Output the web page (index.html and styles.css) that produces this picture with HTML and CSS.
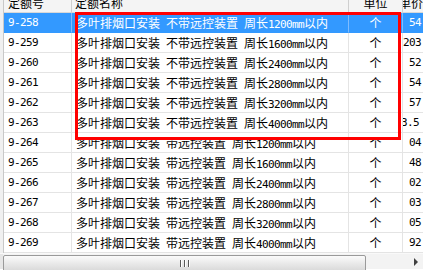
FILE: index.html
```html
<!DOCTYPE html>
<html>
<head>
<meta charset="utf-8">
<link rel="stylesheet" href="styles.css">
</head>
<body>
<div class="table">
  <div class="row head">
    <div class="gut"></div>
    <div class="c c1"><span class="ht">定额号</span></div>
    <div class="c c2"><span class="ht">定额名称</span></div>
    <div class="c c3"><span class="ht">单位</span></div>
    <div class="c c4"><span class="ht hp">单价</span></div>
  </div>
  <div class="row sel">
    <div class="gut"></div>
    <div class="c c1 n">9-258</div>
    <div class="c c2">多叶排烟口安装<span class="n"> </span>不带远控装置<span class="n"> </span>周长<span class="n">1200mm</span>以内</div>
    <div class="c c3">个</div>
    <div class="c c4 n">54</div>
  </div>
  <div class="row">
    <div class="gut"></div>
    <div class="c c1 n">9-259</div>
    <div class="c c2">多叶排烟口安装<span class="n"> </span>不带远控装置<span class="n"> </span>周长<span class="n">1600mm</span>以内</div>
    <div class="c c3">个</div>
    <div class="c c4 n w">203</div>
  </div>
  <div class="row">
    <div class="gut"></div>
    <div class="c c1 n">9-260</div>
    <div class="c c2">多叶排烟口安装<span class="n"> </span>不带远控装置<span class="n"> </span>周长<span class="n">2400mm</span>以内</div>
    <div class="c c3">个</div>
    <div class="c c4 n">52</div>
  </div>
  <div class="row">
    <div class="gut"></div>
    <div class="c c1 n">9-261</div>
    <div class="c c2">多叶排烟口安装<span class="n"> </span>不带远控装置<span class="n"> </span>周长<span class="n">2800mm</span>以内</div>
    <div class="c c3">个</div>
    <div class="c c4 n">54</div>
  </div>
  <div class="row">
    <div class="gut"></div>
    <div class="c c1 n">9-262</div>
    <div class="c c2">多叶排烟口安装<span class="n"> </span>不带远控装置<span class="n"> </span>周长<span class="n">3200mm</span>以内</div>
    <div class="c c3">个</div>
    <div class="c c4 n">57</div>
  </div>
  <div class="row">
    <div class="gut"></div>
    <div class="c c1 n">9-263</div>
    <div class="c c2">多叶排烟口安装<span class="n"> </span>不带远控装置<span class="n"> </span>周长<span class="n">4000mm</span>以内</div>
    <div class="c c3">个</div>
    <div class="c c4 n w cut">3.5</div>
  </div>
  <div class="row">
    <div class="gut"></div>
    <div class="c c1 n">9-264</div>
    <div class="c c2">多叶排烟口安装<span class="n"> </span>带远控装置<span class="n"> </span>周长<span class="n">1200mm</span>以内</div>
    <div class="c c3">个</div>
    <div class="c c4 n">04</div>
  </div>
  <div class="row">
    <div class="gut"></div>
    <div class="c c1 n">9-265</div>
    <div class="c c2">多叶排烟口安装<span class="n"> </span>带远控装置<span class="n"> </span>周长<span class="n">1600mm</span>以内</div>
    <div class="c c3">个</div>
    <div class="c c4 n">48</div>
  </div>
  <div class="row">
    <div class="gut"></div>
    <div class="c c1 n">9-266</div>
    <div class="c c2">多叶排烟口安装<span class="n"> </span>带远控装置<span class="n"> </span>周长<span class="n">2400mm</span>以内</div>
    <div class="c c3">个</div>
    <div class="c c4 n">02</div>
  </div>
  <div class="row">
    <div class="gut"></div>
    <div class="c c1 n">9-267</div>
    <div class="c c2">多叶排烟口安装<span class="n"> </span>带远控装置<span class="n"> </span>周长<span class="n">2800mm</span>以内</div>
    <div class="c c3">个</div>
    <div class="c c4 n">03</div>
  </div>
  <div class="row">
    <div class="gut"></div>
    <div class="c c1 n">9-268</div>
    <div class="c c2">多叶排烟口安装<span class="n"> </span>带远控装置<span class="n"> </span>周长<span class="n">3200mm</span>以内</div>
    <div class="c c3">个</div>
    <div class="c c4 n">05</div>
  </div>
  <div class="row">
    <div class="gut"></div>
    <div class="c c1 n">9-269</div>
    <div class="c c2">多叶排烟口安装<span class="n"> </span>带远控装置<span class="n"> </span>周长<span class="n">4000mm</span>以内</div>
    <div class="c c3">个</div>
    <div class="c c4 n">92</div>
  </div>
  <div class="hscroll">
    <div class="sgut"></div>
    <div class="thumb"><span class="grip"></span><span class="grip"></span><span class="grip"></span></div>
    <div class="track"></div>
    <div class="arrow"></div>
  </div>
  <div class="mark"></div>
</div>
</body>
</html>
```

FILE: styles.css
```css
html, body {
  margin: 0;
  padding: 0;
  background: #ffffff;
  overflow: hidden;
}
.table {
  position: relative;
  width: 423px;
  height: 270px;
  overflow: hidden;
  font-family: "Noto Sans CJK SC", "DejaVu Sans", sans-serif;
  font-size: 12px;
  color: #000;
}
.row {
  display: grid;
  grid-template-columns: 4px 68px 277px 54px 60px;
  height: 20px;
}
.gut {
  background: #f0f0f0;
  border-right: 1px solid #c8c8c8;
  box-sizing: border-box;
}
.c {
  box-sizing: border-box;
  border-right: 1px solid #e4e4e4;
  border-bottom: 1px solid #e4e4e4;
  overflow: hidden;
  white-space: nowrap;
  line-height: 19px;
  height: 20px;
}
.c1 { padding-left: 4px; }
.c2 { padding-left: 4px; }
.c3 { text-align: center; }
.c4 { padding-left: 6px; border-right: none; }
.c4.w { padding-left: 0; }
.c4.cut { text-indent: -2px; }
.n {
  font-family: "DejaVu Sans Mono", monospace;
  font-size: 11px;
  letter-spacing: -0.62px;
}
.head {
  height: 13px;
  background: #f4f4f4;
}
.head .c {
  height: 13px;
  line-height: 12px;
  background: #f4f4f4;
  border-right: 1px solid #cfcfcf;
  border-bottom: 1px solid #d8d8d8;
}
.ht {
  display: block;
  margin-top: -3px;
}
.head .c1 { padding-left: 4px; }
.head .c2 { padding-left: 3px; }
.hp { margin-left: -10px; }
.sel .c {
  background: #3399ff;
  color: #ffffff;
  border-right-color: #7fbcff;
  border-bottom-color: #3399ff;
}
.hscroll {
  display: flex;
  height: 16px;
  background: #f3f3f3;
  border-top: 1px solid #f9f9f9;
  box-sizing: border-box;
}
.sgut {
  width: 3px;
  background: #e6e6e6;
}
.thumb {
  width: 363px;
  margin-top: 1px;
  height: 18px;
  box-sizing: border-box;
  border: 1px solid #9a9a9a;
  border-radius: 2px;
  background: linear-gradient(#fbfbfb, #e8e8e8 50%, #d6d6d6);
  display: flex;
  justify-content: center;
  align-items: flex-start;
  gap: 2px;
  padding-top: 4px;
}
.grip {
  width: 1px;
  height: 7px;
  background: #5a5a5a;
  border-right: 1px solid #ffffff;
}
.track { flex: 1; }
.arrow {
  width: 0;
  height: 0;
  margin: 4px 5px 0 0;
  border-top: 4px solid transparent;
  border-bottom: 4px solid transparent;
  border-left: 4px solid #404040;
}
.mark {
  position: absolute;
  left: 75px;
  top: 12px;
  width: 326px;
  height: 128px;
  box-sizing: border-box;
  border: 3px solid #ff0000;
}
```
